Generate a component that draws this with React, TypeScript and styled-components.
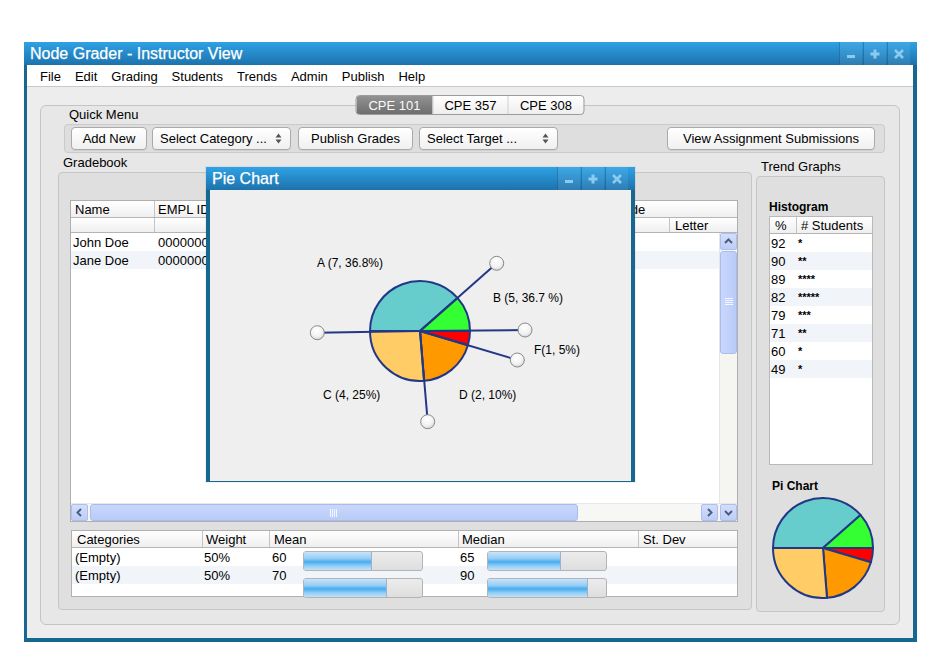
import React from "react";
import styled, { createGlobalStyle } from "styled-components";

const Global = createGlobalStyle`
  html, body { margin: 0; padding: 0; background: #ffffff; }
  body { font-family: "Liberation Sans", Arial, sans-serif; font-size: 13px; color: #000; }
  * { box-sizing: border-box; }
`;

/* ---------- window chrome ---------- */
const Window = styled.div`
  position: relative;
  margin: 42px 0 0 24px;
  width: 893px;
  height: 600px;
  background: #176790;
  padding: 0 4px 4px 3px;
  display: flex;
  flex-direction: column;
`;

const TitleBar = styled.div<{ $inset: string }>`
  margin: ${(p) => p.$inset};
  height: 23px;
  flex: none;
  display: flex;
  align-items: stretch;
  background: linear-gradient(#2ea2e6, #1d72ab);
  padding: 0 7px 0 6px;
`;

const TitleText = styled.div`
  color: #fff;
  font-size: 16px;
  line-height: 23px;
  -webkit-text-stroke: 0.25px #fff;
`;

const Controls = styled.div`
  margin-left: auto;
  display: flex;
  gap: 1px;
`;

const ControlButton = styled.div`
  width: 23px;
  display: flex;
  align-items: center;
  justify-content: center;
  background: rgba(255, 255, 255, 0.08);
  border-left: 1px solid rgba(10, 60, 100, 0.35);
`;

const CtlIcon = ({ kind }: { kind: "min" | "max" | "close" }) => (
  <svg width="12" height="12" viewBox="0 0 12 12">
    {kind === "min" && <rect x="2" y="7" width="8" height="3" fill="#8ccaf0" />}
    {kind === "max" && (
      <path d="M4.5 1.5h3v3h3v3h-3v3h-3v-3h-3v-3h3z" fill="#8ccaf0" />
    )}
    {kind === "close" && (
      <path d="M2 2 L10 10 M10 2 L2 10" stroke="#8ccaf0" strokeWidth="2.6" />
    )}
  </svg>
);

const WindowControls = () => (
  <Controls>
    <ControlButton><CtlIcon kind="min" /></ControlButton>
    <ControlButton><CtlIcon kind="max" /></ControlButton>
    <ControlButton><CtlIcon kind="close" /></ControlButton>
  </Controls>
);

const MenuBar = styled.div`
  height: 22px;
  flex: none;
  background: #fff;
  display: flex;
  align-items: center;
  gap: 14px;
  padding: 1px 0 0 13px;
  border-bottom: 1px solid #c9c9c9;
`;

const MenuItem = styled.span`
  font-size: 13px;
`;

const Content = styled.div`
  flex: 1;
  background: #ededed;
  padding: 18px 13px 13px 13px;
`;

const Panel = styled.div`
  position: relative;
  height: 520px;
  background: #e7e7e7;
  border: 1px solid #c4c4c4;
  border-radius: 6px;
  display: flex;
  flex-direction: column;
`;

/* ---------- segmented tabs ---------- */
const Tabs = styled.div`
  position: absolute;
  top: -11px;
  left: 50%;
  transform: translateX(-50%);
  display: flex;
  height: 20px;
  border: 1px solid #9c9c9c;
  border-radius: 4px;
  overflow: hidden;
  background: linear-gradient(#ffffff, #eeeeee);
`;

const Tab = styled.div<{ $selected?: boolean; $w: number }>`
  width: ${(p) => p.$w}px;
  display: flex;
  align-items: center;
  justify-content: center;
  font-size: 13px;
  color: ${(p) => (p.$selected ? "#fafafa" : "#000")};
  background: ${(p) => (p.$selected ? "linear-gradient(#929292, #6e6e6e)" : "transparent")};
  & + & {
    border-left: 1px solid #d0d0d0;
  }
`;

/* ---------- quick menu ---------- */
const SectionLabel = styled.div<{ $ml: number; $h: number }>`
  margin-left: ${(p) => p.$ml}px;
  height: ${(p) => p.$h}px;
  line-height: ${(p) => p.$h}px;
  font-size: 13px;
  flex: none;
`;

const QuickBox = styled.div`
  margin-left: 23px;
  width: 821px;
  height: 29px;
  background: #dedede;
  border: 1px solid #cacaca;
  border-radius: 4px;
  display: flex;
  align-items: center;
  padding: 0 9px 0 6px;
`;

const Button = styled.div<{ $w: number; $ml?: number; $auto?: boolean }>`
  width: ${(p) => p.$w}px;
  height: 23px;
  margin-left: ${(p) => (p.$auto ? "auto" : `${p.$ml ?? 0}px`)};
  background: linear-gradient(#ffffff, #f0f0f0);
  border: 1px solid #aaaaaa;
  border-radius: 4px;
  box-shadow: 0 1px 0 rgba(0, 0, 0, 0.06);
  display: flex;
  align-items: center;
  justify-content: center;
  font-size: 13px;
  flex: none;
`;

const SelectBox = styled(Button)`
  justify-content: space-between;
  padding: 0 8px 0 7px;
`;

const UpDown = () => (
  <svg width="7" height="11" viewBox="0 0 7 11">
    <path d="M0.5 4.5 L3.5 0.5 L6.5 4.5 Z" fill="#555" />
    <path d="M0.5 6.5 L3.5 10.5 L6.5 6.5 Z" fill="#555" />
  </svg>
);

/* ---------- main columns ---------- */
const Columns = styled.div`
  display: flex;
  margin-left: 17px;
  gap: 4px;
`;

const Column = styled.div<{ $w: number; $mt: number }>`
  width: ${(p) => p.$w}px;
  margin-top: ${(p) => p.$mt}px;
  display: flex;
  flex-direction: column;
`;

const GroupBox = styled.div<{ $h: number; $pad: string }>`
  height: ${(p) => p.$h}px;
  background: #dfdfdf;
  border: 1px solid #c6c6c6;
  border-radius: 4px;
  padding: ${(p) => p.$pad};
  display: flex;
  flex-direction: column;
`;

/* ---------- grade table ---------- */
const GradeTable = styled.div`
  width: 668px;
  height: 322px;
  background: #fff;
  border: 1px solid #afafaf;
  display: flex;
  flex-direction: column;
`;

const HeadRow = styled.div<{ $h: number; $cols: string }>`
  height: ${(p) => p.$h}px;
  display: grid;
  grid-template-columns: ${(p) => p.$cols};
  background: linear-gradient(#ffffff, #efefef);
  border-bottom: 1px solid #b4b4b4;
  flex: none;
`;

const HeadCell = styled.div<{ $sep?: boolean; $pl?: number }>`
  display: flex;
  align-items: center;
  padding-left: ${(p) => p.$pl ?? 4}px;
  font-size: 13px;
  white-space: nowrap;
  overflow: hidden;
  position: relative;
  border-left: ${(p) => (p.$sep ? "1px solid #c4c4c4" : "none")};
  background-clip: padding-box;
`;

const GradeBody = styled.div`
  flex: 1;
  display: flex;
  min-height: 0;
`;

const RowsArea = styled.div`
  flex: 1;
  display: flex;
  flex-direction: column;
`;

const DataRow = styled.div<{ $alt?: boolean; $cols: string; $h?: number }>`
  height: ${(p) => p.$h ?? 18}px;
  display: grid;
  grid-template-columns: ${(p) => p.$cols};
  align-items: center;
  background: ${(p) => (p.$alt ? "#f1f4f9" : "#fff")};
  font-size: 13px;
  white-space: nowrap;
`;

const Cell = styled.div<{ $pl?: number }>`
  padding-left: ${(p) => p.$pl ?? 2}px;
  overflow: hidden;
`;

const VScroll = styled.div`
  width: 18px;
  background: #f5f5f2;
  border-left: 1px solid #e6e6e2;
  display: flex;
  flex-direction: column;
  align-items: center;
`;

const ArrowBtn = styled.div`
  width: 17px;
  height: 17px;
  flex: none;
  background: linear-gradient(#d3defb, #bccdf7);
  border: 1px solid #adbfee;
  border-radius: 2px;
  display: flex;
  align-items: center;
  justify-content: center;
`;

const VThumb = styled.div`
  width: 17px;
  height: 103px;
  margin-top: 1px;
  background: linear-gradient(90deg, #c9d7fb, #b9cbf8);
  border: 1px solid #a9bcee;
  border-radius: 3px;
  display: flex;
  align-items: flex-start;
  justify-content: center;
  padding-top: 46px;
`;

const HScroll = styled.div`
  height: 18px;
  flex: none;
  display: flex;
  align-items: center;
  background: #f7f7f5;
  border-top: 1px solid #e8e8e4;
`;

const HThumb = styled.div`
  width: 488px;
  height: 17px;
  margin-left: 2px;
  background: linear-gradient(#c9d7fb, #b9cbf8);
  border: 1px solid #a9bcee;
  border-radius: 3px;
  display: flex;
  align-items: center;
  justify-content: center;
`;

const Spacer = styled.div<{ $w?: number }>`
  flex: ${(p) => (p.$w ? `0 0 ${p.$w}px` : "1")};
`;

const Chevron = ({ dir }: { dir: "up" | "down" | "left" | "right" }) => {
  const d = {
    up: "M2 7 L5.5 3.5 L9 7",
    down: "M2 4 L5.5 7.5 L9 4",
    left: "M7 2 L3.5 5.5 L7 9",
    right: "M4 2 L7.5 5.5 L4 9",
  }[dir];
  return (
    <svg width="11" height="11" viewBox="0 0 11 11">
      <path d={d} fill="none" stroke="#4e5e80" strokeWidth="2" />
    </svg>
  );
};

const GripV = () => (
  <svg width="8" height="8" viewBox="0 0 8 8">
    {[0.5, 2.5, 4.5, 6.5].map((y) => (
      <line key={y} x1="0" x2="8" y1={y} y2={y} stroke="#f4f7ff" strokeWidth="1" />
    ))}
  </svg>
);
const GripH = () => (
  <svg width="8" height="8" viewBox="0 0 8 8">
    {[0.5, 2.5, 4.5, 6.5].map((x) => (
      <line key={x} y1="0" y2="8" x1={x} x2={x} stroke="#f4f7ff" strokeWidth="1" />
    ))}
  </svg>
);

/* ---------- stats table ---------- */
const StatsTable = styled.div`
  width: 667px;
  height: 67px;
  margin: 8px 0 0 1px;
  background: #fff;
  border: 1px solid #b0b0b0;
  display: flex;
  flex-direction: column;
`;

const StatsBody = styled.div`
  position: relative;
  flex: 1;
`;

const Progress = styled.div<{ $x: number; $y: number }>`
  position: absolute;
  left: ${(p) => p.$x}px;
  top: ${(p) => p.$y}px;
  width: 120px;
  height: 20px;
  background: linear-gradient(#ececec, #dedede);
  border: 1px solid #b3b3b3;
  border-radius: 3px;
  overflow: hidden;
`;

const ProgressFill = styled.div`
  height: 100%;
  background: linear-gradient(#c7e3fa 0%, #98cef5 35%, #47acef 55%, #8ccbf5 75%, #c2e2f9 100%);
  border-right: 1px solid #9fb3c8;
`;

/* ---------- histogram ---------- */
const BoldLabel = styled.div<{ $ml: number; $mt: number }>`
  margin: ${(p) => p.$mt}px 0 0 ${(p) => p.$ml}px;
  height: 18px;
  line-height: 18px;
  font-size: 12px;
  font-weight: bold;
  flex: none;
`;

const HistTable = styled.div`
  width: 104px;
  height: 249px;
  background: #fff;
  border: 1px solid #b9b9b9;
  display: flex;
  flex-direction: column;
  flex: none;
`;

const Stars = styled.span`
  font-size: 11px;
  font-weight: bold;
  position: relative;
  top: -1px;
`;

/* ---------- pie ---------- */
const SLICES = [
  { a0: 180, a1: 318.6, color: "#66cccc" },
  { a0: 318.6, a1: 360, color: "#33ff33" },
  { a0: 0, a1: 16.6, color: "#ff0000" },
  { a0: 16.6, a1: 85.4, color: "#ff9900" },
  { a0: 85.4, a1: 180, color: "#ffcc66" },
];

const pt = (cx: number, cy: number, r: number, deg: number) => [
  cx + r * Math.cos((deg * Math.PI) / 180),
  cy + r * Math.sin((deg * Math.PI) / 180),
];

const slicePath = (cx: number, cy: number, r: number, a0: number, a1: number) => {
  const [x0, y0] = pt(cx, cy, r, a0);
  const [x1, y1] = pt(cx, cy, r, a1);
  const large = a1 - a0 > 180 ? 1 : 0;
  return `M${cx},${cy} L${x0},${y0} A${r},${r} 0 ${large} 1 ${x1},${y1} Z`;
};

const PieSlices = ({ cx, cy, r }: { cx: number; cy: number; r: number }) => (
  <g>
    {SLICES.map((s, i) => (
      <path
        key={i}
        d={slicePath(cx, cy, r, s.a0, s.a1)}
        fill={s.color}
        stroke="#223887"
        strokeWidth="2"
        strokeLinejoin="round"
      />
    ))}
  </g>
);

const PieWindow = styled.div`
  position: absolute;
  left: 182px;
  top: 125px;
  width: 429px;
  height: 315px;
  background: #176790;
  padding: 0 4px 4px 4px;
  display: flex;
  flex-direction: column;
  box-shadow: 0 0 0 1px rgba(0, 0, 0, 0.05);
`;

const PieBody = styled.div`
  flex: 1;
  background: #efefef;
`;

const ChartText = styled.text`
  font-family: "Liberation Sans", Arial, sans-serif;
  font-size: 12px;
  fill: #000;
`;

const HANDLES = [
  [286.7, 73.3],
  [315, 140],
  [307.3, 170],
  [217.7, 231.7],
  [107.3, 142.7],
];

const LABELS: [string, number, number][] = [
  ["A (7, 36.8%)", 107, 73],
  ["B (5, 36.7 %)", 283, 108],
  ["F(1, 5%)", 324, 160],
  ["C (4, 25%)", 113, 205],
  ["D (2, 10%)", 249, 205],
];

const BigPie = () => {
  const cx = 210;
  const cy = 141;
  return (
    <svg width="421" height="288" viewBox="0 0 421 288">
      <defs>
        <radialGradient id="knob" cx="45%" cy="35%" r="70%">
          <stop offset="0%" stopColor="#ffffff" />
          <stop offset="60%" stopColor="#f2f2f2" />
          <stop offset="100%" stopColor="#cfcfcf" />
        </radialGradient>
      </defs>
      <PieSlices cx={cx} cy={cy} r={50} />
      {HANDLES.map(([x, y], i) => (
        <line key={i} x1={cx} y1={cy} x2={x} y2={y} stroke="#223887" strokeWidth="2" />
      ))}
      {HANDLES.map(([x, y], i) => (
        <circle key={i} cx={x} cy={y} r="7" fill="url(#knob)" stroke="#8a8a8a" strokeWidth="1" />
      ))}
      {LABELS.map(([t, x, y]) => (
        <ChartText key={t} x={x} y={y} dominantBaseline="central">
          {t}
        </ChartText>
      ))}
    </svg>
  );
};

const SmallPie = styled.svg`
  margin: 1px 0 0 2px;
  flex: none;
`;

/* ---------- data ---------- */
const MENU = ["File", "Edit", "Grading", "Students", "Trends", "Admin", "Publish", "Help"];
const HIST: [string, string][] = [
  ["92", "*"],
  ["90", "**"],
  ["89", "****"],
  ["82", "*****"],
  ["79", "***"],
  ["71", "**"],
  ["60", "*"],
  ["49", "*"],
];
const STATS_COLS = "130px 67px 189px 180px 1fr";

export default function App() {
  return (
    <>
      <Global />
      <Window>
        <TitleBar $inset="0 -4px 0 -3px">
          <TitleText>Node Grader - Instructor View</TitleText>
          <WindowControls />
        </TitleBar>
        <MenuBar>
          {MENU.map((m) => (
            <MenuItem key={m}>{m}</MenuItem>
          ))}
        </MenuBar>
        <Content>
          <Panel>
            <Tabs>
              <Tab $selected $w={76}>CPE 101</Tab>
              <Tab $w={75}>CPE 357</Tab>
              <Tab $w={76}>CPE 308</Tab>
            </Tabs>
            <SectionLabel $ml={28} $h={18}>Quick Menu</SectionLabel>
            <QuickBox>
              <Button $w={76}>Add New</Button>
              <SelectBox $w={139} $ml={5}>
                <span>Select Category ...</span>
                <UpDown />
              </SelectBox>
              <Button $w={115} $ml={7}>Publish Grades</Button>
              <SelectBox $w={139} $ml={6}>
                <span>Select Target ...</span>
                <UpDown />
              </SelectBox>
              <Button $w={208} $auto>View Assignment Submissions</Button>
            </QuickBox>
            <Columns>
              <Column $w={694} $mt={0}>
                <SectionLabel $ml={5} $h={19}>Gradebook</SectionLabel>
                <GroupBox $h={438} $pad="27px 0 0 11px">
                  <GradeTable>
                    <HeadRow $h={17} $cols="83px 453px 1fr">
                      <HeadCell>Name</HeadCell>
                      <HeadCell $sep $pl={3}>EMPL ID</HeadCell>
                      <HeadCell $pl={2}>Grade</HeadCell>
                    </HeadRow>
                    <HeadRow $h={15} $cols="83px 515px 1fr">
                      <HeadCell />
                      <HeadCell $sep />
                      <HeadCell $sep $pl={5}>Letter</HeadCell>
                    </HeadRow>
                    <GradeBody>
                      <RowsArea>
                        <DataRow $cols="85px 1fr">
                          <Cell>John Doe</Cell>
                          <Cell>0000000</Cell>
                        </DataRow>
                        <DataRow $alt $cols="85px 1fr">
                          <Cell>Jane Doe</Cell>
                          <Cell>0000000</Cell>
                        </DataRow>
                      </RowsArea>
                      <VScroll>
                        <ArrowBtn><Chevron dir="up" /></ArrowBtn>
                        <VThumb><GripV /></VThumb>
                      </VScroll>
                    </GradeBody>
                    <HScroll>
                      <ArrowBtn><Chevron dir="left" /></ArrowBtn>
                      <HThumb><GripH /></HThumb>
                      <Spacer />
                      <ArrowBtn><Chevron dir="right" /></ArrowBtn>
                      <Spacer $w={2} />
                      <ArrowBtn><Chevron dir="down" /></ArrowBtn>
                    </HScroll>
                  </GradeTable>
                  <StatsTable>
                    <HeadRow $h={17} $cols={STATS_COLS}>
                      <HeadCell $pl={5}>Categories</HeadCell>
                      <HeadCell $sep $pl={3}>Weight</HeadCell>
                      <HeadCell $sep $pl={4}>Mean</HeadCell>
                      <HeadCell $sep $pl={3}>Median</HeadCell>
                      <HeadCell $sep $pl={4}>St. Dev</HeadCell>
                    </HeadRow>
                    <StatsBody>
                      <DataRow $cols={STATS_COLS}>
                        <Cell $pl={3}>(Empty)</Cell>
                        <Cell $pl={2}>50%</Cell>
                        <Cell $pl={3}>60</Cell>
                        <Cell $pl={2}>65</Cell>
                        <Cell />
                      </DataRow>
                      <DataRow $alt $cols={STATS_COLS}>
                        <Cell $pl={3}>(Empty)</Cell>
                        <Cell $pl={2}>50%</Cell>
                        <Cell $pl={3}>70</Cell>
                        <Cell $pl={2}>90</Cell>
                        <Cell />
                      </DataRow>
                      <Progress $x={231} $y={3}><ProgressFill style={{ width: "58%" }} /></Progress>
                      <Progress $x={231} $y={30}><ProgressFill style={{ width: "70%" }} /></Progress>
                      <Progress $x={415} $y={3}><ProgressFill style={{ width: "62%" }} /></Progress>
                      <Progress $x={415} $y={30}><ProgressFill style={{ width: "85%" }} /></Progress>
                    </StatsBody>
                  </StatsTable>
                </GroupBox>
              </Column>
              <Column $w={129} $mt={4}>
                <SectionLabel $ml={5} $h={19}>Trend Graphs</SectionLabel>
                <GroupBox $h={436} $pad="3px 0 0 12px">
                  <BoldLabel $ml={0} $mt={18}>Histogram</BoldLabel>
                  <HistTable>
                    <HeadRow $h={17} $cols="26px 1fr">
                      <HeadCell $pl={5}>%</HeadCell>
                      <HeadCell $sep $pl={4}># Students</HeadCell>
                    </HeadRow>
                    {HIST.map(([p, s], i) => (
                      <DataRow key={p} $alt={i % 2 === 1} $cols="28px 1fr">
                        <Cell $pl={1}>{p}</Cell>
                        <Cell $pl={0}><Stars>{s}</Stars></Cell>
                      </DataRow>
                    ))}
                  </HistTable>
                  <BoldLabel $ml={3} $mt={12}>Pi Chart</BoldLabel>
                  <SmallPie width="104" height="104" viewBox="0 0 104 104">
                    <PieSlices cx={52} cy={52} r={50} />
                  </SmallPie>
                </GroupBox>
              </Column>
            </Columns>
          </Panel>
        </Content>
        <PieWindow>
          <TitleBar $inset="0 -4px">
            <TitleText>Pie Chart</TitleText>
            <WindowControls />
          </TitleBar>
          <PieBody>
            <BigPie />
          </PieBody>
        </PieWindow>
      </Window>
    </>
  );
}
